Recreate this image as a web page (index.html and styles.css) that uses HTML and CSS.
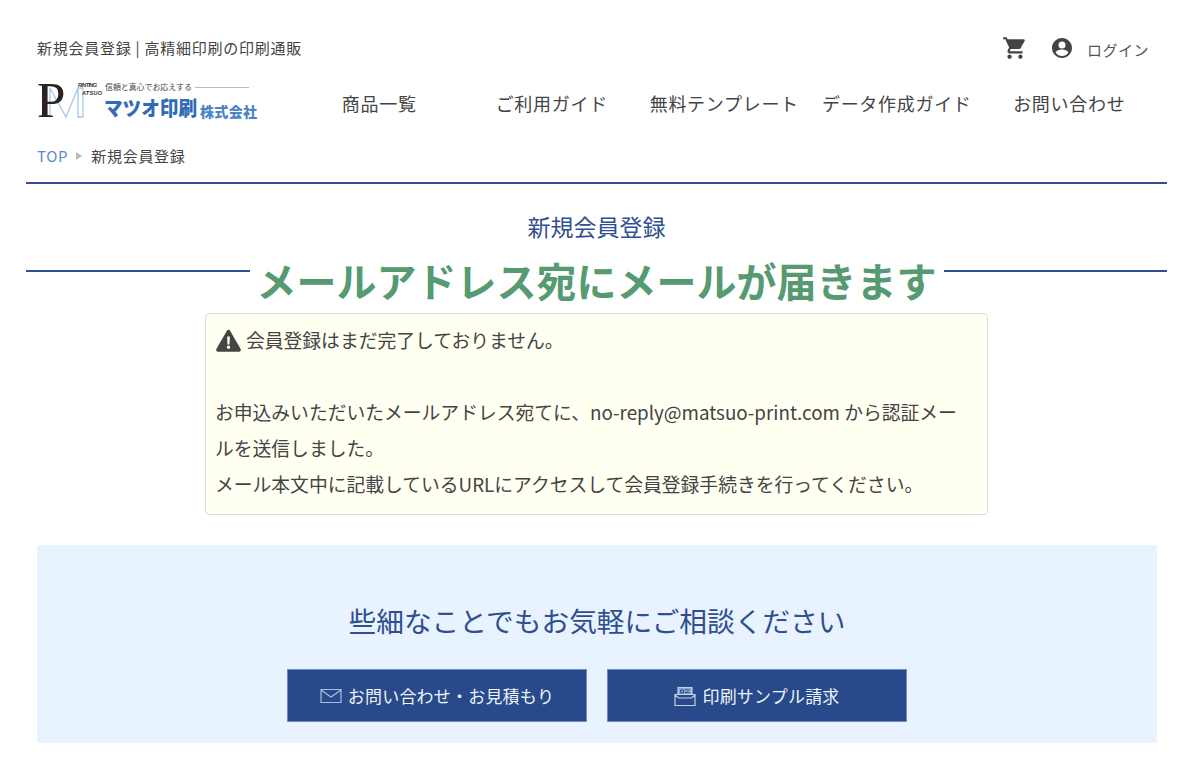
FILE: index.html
```html
<!DOCTYPE html>
<html lang="ja">
<head>
    <meta charset="UTF-8">
    <meta name="viewport" content="width=device-width, initial-scale=1.0">
    <title>新規会員登録 | 高精細印刷の印刷通販</title>
    <link rel="stylesheet" href="styles.css">
</head>
<body>

<div class="container">
    <div class="header">
        <div class="header-top">
            <h1 class="site-title">新規会員登録 | 高精細印刷の印刷通販</h1>
            <div class="user-menu">
                <svg class="icon-cart" viewBox="0 0 24 24" width="26" height="26">
                    <path fill="#444" d="M7 18c-1.1 0-2 .9-2 2s.9 2 2 2 2-.9 2-2-.9-2-2-2zM1 2v2h2l3.6 7.59-1.35 2.45c-.16.28-.25.61-.25.96 0 1.1.9 2 2 2h12v-2H7.42c-.14 0-.25-.11-.25-.25l.03-.12.9-1.63h7.45c.75 0 1.41-.41 1.75-1.03l3.58-6.49A1 1 0 0 0 20 4H5.21l-.94-2H1zm16 16c-1.1 0-2 .9-2 2s.9 2 2 2 2-.9 2-2-.9-2-2-2z"/>
                </svg>
                <svg class="icon-user" viewBox="0 0 24 24" width="24" height="24">
                    <path fill="#444" d="M12 2C6.48 2 2 6.48 2 12s4.48 10 10 10 10-4.48 10-10S17.52 2 12 2zm0 3.500a3.500 3.500 0 1 1 0 7 3.500 3.500 0 0 1 0-7zm0 14.500c-2.600 0-4.900-1.300-6.300-3.300.03-2.100 4.200-3.200 6.300-3.200s6.270 1.100 6.300 3.200C16.900 18.700 14.600 20 12 20z"/>
                </svg>
                <a class="login" href="#">ログイン</a>
            </div>
        </div>
        <div class="header-main">
            <a class="logo" href="#">
                <svg viewBox="0 0 222 60" width="222" height="60">
                    <path d="M13 18 L13 47 M13 18 L29 47 L41 18 M41 18 H46 V47 H41 Z" fill="none" stroke="#a9c6e6" stroke-width="1.300"/>
                    <text x="0" y="47" class="logo-p">P</text>
                    <path d="M5 14 H10 V46 H5 Z" fill="#2a2420"/>
                    <text x="41" y="17" class="logo-small" textLength="19">RINTING</text>
                    <text x="45" y="25" class="logo-small" textLength="20">ATSUO</text>
                    <text x="68" y="20" class="logo-tag" textLength="87">信頼と真心でお応えする</text>
                    <path d="M158 17.500 H212" stroke="#bbb" stroke-width="1"/>
                    <text x="67" y="46" class="logo-name" textLength="93" lengthAdjust="spacingAndGlyphs">マツオ印刷</text>
                    <text x="163" y="47" class="logo-corp" textLength="57">株式会社</text>
                </svg>
            </a>
            <nav class="nav">
                <a href="#">商品一覧</a>
                <a href="#">ご利用ガイド</a>
                <a href="#">無料テンプレート</a>
                <a href="#">データ作成ガイド</a>
                <a href="#">お問い合わせ</a>
            </nav>
        </div>
        <div class="breadcrumb">
            <a href="#">TOP</a>
            <span class="crumb-arrow"></span>
            <span>新規会員登録</span>
        </div>
    </div>

    <div class="page-head">
        <h2 class="page-title">新規会員登録</h2>
        <div class="mail-title"><span>メールアドレス宛にメールが届きます</span></div>
    </div>

    <div class="notice">
        <p class="notice-first">
            <svg viewBox="0 0 24 24" width="27" height="27">
                <path fill="#444" d="M12 2.500c-.6 0-1.100.3-1.400.8L1.200 19.600c-.6 1.100.2 2.400 1.400 2.400h18.800c1.200 0 2-1.300 1.400-2.400L13.400 3.300c-.3-.5-.8-.8-1.400-.8z"/>
                <path fill="#fffff2" d="M10.800 8.500h2.400l-.3 7h-1.800zM12 16.500a1.500 1.500 0 1 1 0 3 1.500 1.500 0 0 1 0-3z"/>
            </svg>
            <span class="notice-lead">会員登録はまだ完了しておりません。</span>
        </p>
        <p>お申込みいただいたメールアドレス宛てに、no-reply@matsuo-print.com から認証メールを送信しました。</p>
        <p>メール本文中に記載しているURLにアクセスして会員登録手続きを行ってください。</p>
    </div>

    <div class="contact">
        <h3 class="contact-title">些細なことでもお気軽にご相談ください</h3>
        <div class="contact-btns">
            <a class="btn" href="#">
                <svg viewBox="0 0 22 16" width="22" height="16">
                    <path d="M1 1.500h20v13H1zM1 2l10 7 10-7" fill="none" stroke="#a9bedd" stroke-width="1.200"/>
                </svg>
                お問い合わせ・お見積もり
            </a>
            <a class="btn" href="#">
                <svg viewBox="0 0 22 22" width="22" height="22">
                    <path d="M4 10V2.500h14V10" fill="#8fa6cb" stroke="#c3d1e6" stroke-width="1.200"/>
                    <path d="M6.500 5h3v3h-3zM11 5h4.500M11 7.500h4.500" fill="none" stroke="#284a8a" stroke-width="1"/>
                    <path d="M1 9.500h20v11H1zM1 10l3.500 3h13l3.500-3" fill="#284a8a" stroke="#c3d1e6" stroke-width="1.200"/>
                </svg>
                印刷サンプル請求
            </a>
        </div>
    </div>
</div>

</body>
</html>
```

FILE: styles.css
```css
body {
    font-family: "Noto Sans CJK JP", "Noto Sans", sans-serif;
    background-color: #fff;
    color: #444;
    margin: 0;
}
a {
    color: inherit;
    text-decoration: none;
}
h1, h2, h3, p {
    margin: 0;
    font-weight: normal;
}
.container {
    padding: 0 34px 38px 26px;
}
.header {
    border-bottom: 2px solid #2f4f8f;
    height: 184px;
    box-sizing: border-box;
}
.header-top {
    display: flex;
    justify-content: space-between;
    align-items: center;
    padding: 33px 18px 0 11px;
    height: 30px;
}
.site-title {
    font-size: 15px;
    letter-spacing: 0.750px;
    line-height: 30px;
    color: #444;
}
.user-menu {
    display: flex;
    align-items: center;
}
.icon-cart {
    margin-right: 22px;
}
.icon-user {
    margin-right: 13px;
}
.login {
    font-size: 15px;
    letter-spacing: 0.500px;
    color: #555;
    padding-top: 3px;
}
.header-main {
    display: flex;
    align-items: center;
    padding: 17px 0 0 11px;
    height: 40px;
}
.logo {
    display: block;
    width: 257px;
    height: 60px;
}
.logo-p {
    font-family: "Liberation Serif", serif;
    font-size: 51px;
    fill: #2a2420;
}
.logo-small {
    font-family: "Liberation Sans", sans-serif;
    font-size: 5.500px;
    font-weight: bold;
    font-style: italic;
    fill: #333;
}
.logo-tag {
    font-size: 8px;
    fill: #444;
}
.logo-name {
    font-family: "Noto Sans CJK JP", sans-serif;
    font-size: 20px;
    font-weight: 900;
    fill: #2f6cb5;
}
.logo-corp {
    font-family: "Noto Sans CJK JP", sans-serif;
    font-size: 14px;
    font-weight: 900;
    fill: #4a84c4;
}
.nav {
    flex: 1;
    display: grid;
    grid-template-columns: repeat(5, 172.500px);
    font-size: 18px;
    letter-spacing: 0.700px;
    color: #444;
    text-align: center;
    margin: 5px 0 0 -1px;
}
.breadcrumb {
    display: flex;
    align-items: center;
    padding: 24px 0 0 11px;
    font-size: 15px;
    letter-spacing: 0.700px;
    line-height: 24px;
}
.breadcrumb a {
    color: #5b8ac8;
}
.crumb-arrow {
    width: 0;
    height: 0;
    border-left: 6px solid #bbb;
    border-top: 4px solid transparent;
    border-bottom: 4px solid transparent;
    margin: 0 9px 0 8px;
}
.page-head {
    text-align: center;
}
.page-title {
    font-size: 23px;
    line-height: 32px;
    color: #2f4f8f;
    padding-top: 26px;
}
.mail-title {
    display: flex;
    align-items: center;
    font-size: 40px;
    font-weight: bold;
    line-height: 48px;
    height: 48px;
    color: #559a70;
    margin-top: 14px;
}
.mail-title::before,
.mail-title::after {
    content: "";
    flex: 1;
    height: 2px;
    background-color: #2f4f8f;
    margin-top: -18px;
}
.mail-title span {
    padding: 0 7px;
}
.notice {
    width: 783px;
    box-sizing: border-box;
    margin: 9px auto 0 179px;
    height: 202px;
    padding: 8px 24px 8px 9px;
    background-color: #fffff2;
    border: 1px solid #ddd;
    border-radius: 4px;
    font-size: 18.800px;
    line-height: 36px;
    color: #444;
}
.notice-first {
    display: flex;
    align-items: center;
    gap: 4px;
    height: 36px;
    margin-bottom: 36px;
}
.contact {
    margin: 30px 10px 0 11px;
    height: 198px;
    box-sizing: border-box;
    padding-top: 52px;
    background-color: #e8f3ff;
    border-radius: 3px;
    text-align: center;
}
.contact-title {
    font-size: 27.700px;
    line-height: 46px;
    color: #2f4f8f;
}
.contact-btns {
    display: flex;
    justify-content: center;
    gap: 20px;
    margin-top: 26px;
}
.btn {
    display: flex;
    align-items: center;
    justify-content: center;
    gap: 6px;
    width: 300px;
    height: 53px;
    box-sizing: border-box;
    background-color: #284a8a;
    border: 1px solid #6f8cbd;
    color: #eef3fa;
    font-size: 17px;
    letter-spacing: 0.200px;
}
```
